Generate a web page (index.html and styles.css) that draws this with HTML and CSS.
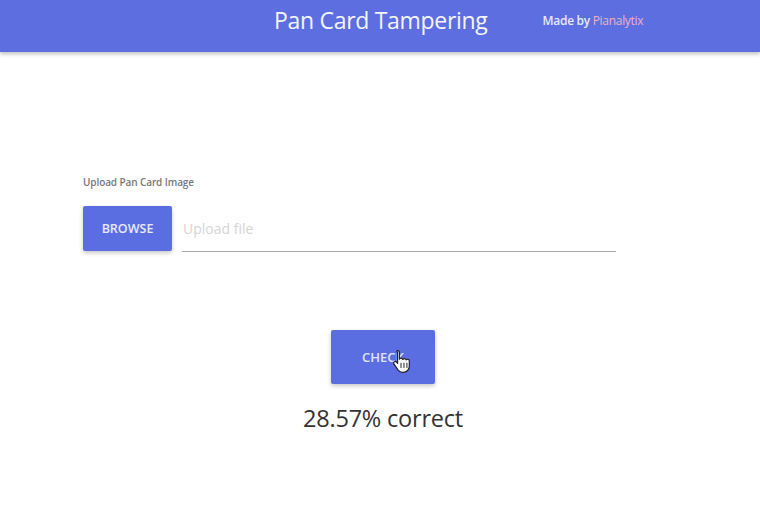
FILE: index.html
```html
<!DOCTYPE html>
<html>
<head>
<meta charset="utf-8">
<link rel="stylesheet" href="styles.css">
</head>
<body>
<header class="topbar">
  <div class="title">Pan Card Tampering</div>
  <div class="credit">Made by <span class="brand">Pianalytix</span></div>
</header>
<main class="content">
  <section class="upload">
    <div class="label">Upload Pan Card Image</div>
    <div class="file-row">
      <button class="btn browse">BROWSE</button>
      <div class="file-field">Upload file</div>
    </div>
  </section>
  <section class="actions">
    <div class="check-wrap">
      <button class="btn check">CHECK</button>
      <svg class="cursor" width="20" height="24" viewBox="0 0 18 22">
        <path d="M5 1.5c1 0 1.6.7 1.6 1.6v6.2c.3-.6.9-.9 1.5-.9.8 0 1.4.5 1.6 1.2.3-.5.9-.8 1.5-.8.8 0 1.4.5 1.6 1.2.3-.4.8-.6 1.3-.6 1 0 1.6.7 1.6 1.6v4.6c0 3.3-2.3 5.8-5.6 5.8H9.6c-1.9 0-3.2-.8-4.3-2.3L1.6 13.7c-.5-.8-.3-1.7.4-2.1.7-.4 1.5-.2 2 .4l.9 1.2V3.1C4 2.2 4.1 1.5 5 1.5z" fill="#fff" stroke="#222" stroke-width="1.1" stroke-linejoin="round"/>
        <path d="M8.1 13v4M10.8 13v4M13.5 13v4" stroke="#222" stroke-width="0.9" stroke-linecap="round"/>
      </svg>
    </div>
    <div class="result">28.57% correct</div>
  </section>
</main>
</body>
</html>
```
FILE: styles.css
```css
* { box-sizing: border-box; }
body {
  margin: 0;
  background: #fff;
  font-family: "Open Sans", "Noto Sans", sans-serif;
  width: 760px;
  height: 519px;
  overflow: hidden;
}
.topbar {
  height: 52px;
  background: #5c6ee0;
  box-shadow: 0 2px 4px rgba(0,0,0,0.25);
  display: flex;
  align-items: flex-start;
  padding-left: 274px;
  padding-top: 5px;
  color: #fff;
}
.title {
  font-size: 23px;
  line-height: 30px;
  letter-spacing: -0.3px;
  color: #f4f5ff;
}
.credit {
  margin-left: 55px;
  font-size: 12px;
  font-weight: 600;
  line-height: 30px;
  letter-spacing: -0.3px;
  color: #e6e9ff;
  padding-top: 1px;
}
.brand { color: #f0b0c8; font-weight: 500; }
.content {
  padding: 0 83px;
}
.upload {
  padding-top: 123px;
}
.label {
  font-size: 10px;
  font-weight: 600;
  color: #777;
  letter-spacing: -0.1px;
  line-height: 14px;
}
.file-row {
  display: flex;
  align-items: flex-start;
  gap: 10px;
  margin-top: 17px;
}
.btn {
  border: none;
  background: #5b6ee1;
  color: #e8ebff;
  font-family: "Open Sans", "Noto Sans", sans-serif;
  font-size: 12.5px;
  font-weight: 600;
  border-radius: 2px;
  box-shadow: 0 2px 4px rgba(0,0,0,0.22);
  padding: 0;
}
.browse {
  width: 89px;
  height: 45px;
}
.file-field {
  width: 434px;
  height: 46px;
  border-bottom: 1px solid #a8a8a8;
  font-size: 14px;
  color: #d4d4d4;
  padding-top: 13px;
  padding-left: 1px;
}
.actions {
  display: flex;
  flex-direction: column;
  align-items: center;
  margin-top: 78px;
  padding-left: 6px;
}
.check-wrap {
  position: relative;
}
.check {
  width: 104px;
  height: 54px;
  font-weight: 600;
  font-size: 13px;
  color: #dfe3ff;
}
.cursor {
  position: absolute;
  left: 61px;
  top: 19px;
}
.result {
  margin-top: 18px;
  font-size: 23.5px;
  color: #333;
  letter-spacing: -0.2px;
}
```
